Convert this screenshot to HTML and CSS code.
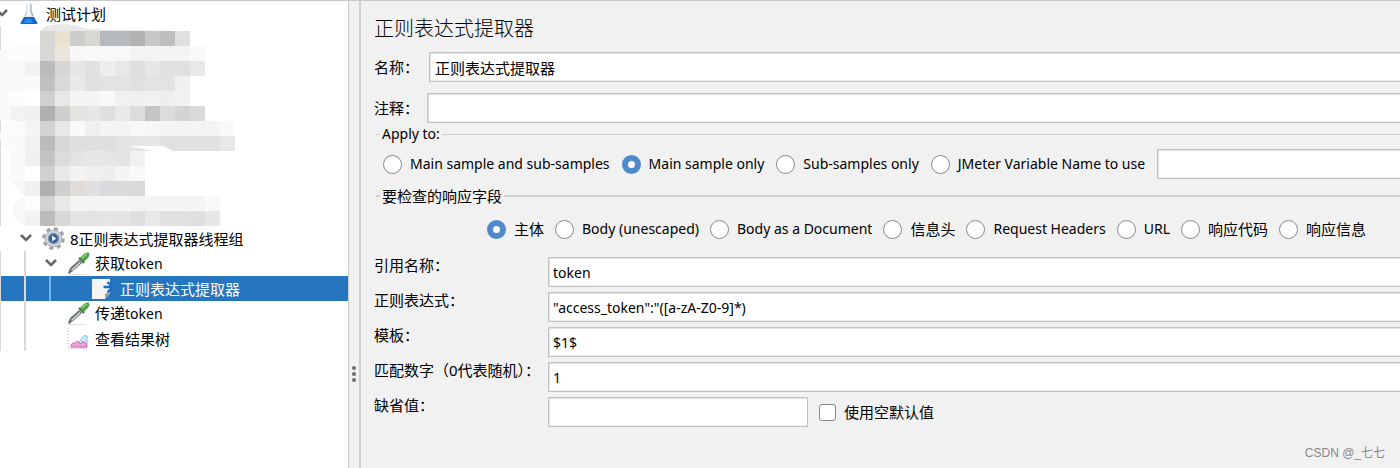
FILE: index.html
```
<!DOCTYPE html>
<html lang="zh-CN">
<head>
<meta charset="utf-8">
<title>正则表达式提取器</title>
<link rel="stylesheet" href="styles.css">
</head>
<body>
<svg class="defs" aria-hidden="true">
  <symbol id="chevron" viewBox="0 0 25 25"><path d="M4 9l5 5 5-5" fill="none" stroke="#666" stroke-width="2.600"/></symbol>
  <symbol id="pipette" viewBox="0 0 23 23">
    <path d="M1 22.500h18" stroke="#e2e2e2"/>
    <path d="M1 21l2-5 9-8 3 3-9 8-4 3z" fill="#6e7473"/>
    <path d="M4 18l8.500-8 1 1-8 7.500z" fill="#d5dada"/>
    <path d="M12 6l5 5" stroke="#4d5550" stroke-width="2"/>
    <path d="M12 6c2-1 3-2 4-3 2-2 4-3 6-2 1 2 0 4-2 6-2 1-2 2-3 4z" fill="#4f9f45"/>
    <path d="M15 6l5-4" stroke="#9bd18c" stroke-width="1.500"/>
  </symbol>
</svg>
<div class="app">
  <nav class="tree">
    <div class="row">
      <svg class="chev"><use href="#chevron"/></svg>
      <svg class="icon" viewBox="0 0 23 23">
        <path d="M8.500 2h5v7l6 12q.5 1-1 1h-15q-1.500 0-1-1l6-12z" fill="#e4e9ed"/>
        <path d="M6 15h10l3.500 6q0 1-1 1H3.500q-1 0-1-1z" fill="#1767c9"/>
        <path d="M8 17h5l2 4H6z" fill="#2f8cf0"/>
        <path d="M13 2v7l2 5" fill="none" stroke="#9aa3aa"/><path d="M9 2v8l-2 4" fill="none" stroke="#c3cbd1"/>
        <path d="M10.500 2v12" stroke="#fff" stroke-width="2"/>
      </svg>
      <span>测试计划</span>
    </div>
    <svg class="mosaic" id="mosaic" viewBox="0 0 250 200" aria-hidden="true"></svg>
    <div class="row">
      <i class="chev first"></i><svg class="chev"><use href="#chevron"/></svg>
      <svg class="icon" viewBox="0 0 23 23">
        <circle cx="11.500" cy="11.500" r="9.800" fill="none" stroke="#9ca2a9" stroke-width="3" stroke-dasharray="4 3.700"/>
        <circle cx="11.500" cy="11.500" r="8.300" fill="#d3d7db" stroke="#a3a9b0"/>
        <circle cx="11.500" cy="11.500" r="5" fill="#2d5f9e" stroke="#7f8fa4" stroke-width="1.500"/>
        <path d="M10 8.500l4.500 3-4.500 3z" fill="#e8f2fc"/>
      </svg>
      <span>8正则表达式提取器线程组</span>
    </div>
    <div class="row">
      <i class="guide"></i><i class="guide"></i><svg class="chev"><use href="#chevron"/></svg>
      <svg class="icon"><use href="#pipette"/></svg>
      <span>获取<b>token</b></span>
    </div>
    <div class="row selected">
      <i class="guide"></i><i class="guide"></i><i class="guide"></i><i class="chev"></i>
      <svg class="icon" viewBox="0 0 23 23">
        <path d="M0 2h18v14l-5 6H0z" fill="#f4f4f4"/><path d="M18 15l-5 7v-5z" fill="#999"/>
        <path d="M11.500 10H20M15.500 5l5 5-5 5.500" fill="none" stroke="#1c6cc4" stroke-width="2.400"/>
      </svg>
      <span>正则表达式提取器</span>
    </div>
    <div class="row">
      <i class="guide"></i><i class="guide"></i><i class="chev"></i>
      <svg class="icon"><use href="#pipette"/></svg>
      <span>传递<b>token</b></span>
    </div>
    <div class="row">
      <i class="guide"></i><i class="guide"></i><i class="chev"></i>
      <svg class="icon" viewBox="0 0 23 23">
        <path d="M1 1v20.500h19" fill="none" stroke="#aaa" stroke-dasharray="1 2"/>
        <path d="M11 20c0-3 1-5 3-7 1-4 3-5 6-4v11z" fill="#d3e6fa" stroke="#8fbcec"/>
        <path d="M4 20c0-4 2-4 4-4 2-3 4-2 5 1 2-1 2-3 4-2 2 0 2 2 3 5z" fill="#ee9fdc" stroke="#cc66b0"/>
      </svg>
      <span>查看结果树</span>
    </div>
  </nav>
  <div class="divider"><i></i><i></i><i></i></div>
  <main class="panel">
    <h1>正则表达式提取器</h1>
    <div class="line"><label for="name">名称：</label><input class="field" id="name" value="正则表达式提取器"></div>
    <div class="line"><label for="note">注释：</label><input class="field" id="note"></div>
    <fieldset>
      <legend>Apply to:</legend>
      <div class="options">
        <label><input type="radio" name="scope">Main sample and sub-samples</label>
        <label><input type="radio" name="scope" checked>Main sample only</label>
        <label><input type="radio" name="scope">Sub-samples only</label>
        <label><input type="radio" name="scope">JMeter Variable Name to use</label>
        <input class="field" aria-label="JMeter Variable Name">
      </div>
    </fieldset>
    <fieldset class="response">
      <legend>要检查的响应字段</legend>
      <div class="options">
        <label class="zh"><input type="radio" name="part" checked>主体</label>
        <label><input type="radio" name="part">Body (unescaped)</label>
        <label><input type="radio" name="part">Body as a Document</label>
        <label class="zh"><input type="radio" name="part">信息头</label>
        <label><input type="radio" name="part">Request Headers</label>
        <label><input type="radio" name="part">URL</label>
        <label class="zh"><input type="radio" name="part">响应代码</label>
        <label class="zh"><input type="radio" name="part">响应信息</label>
      </div>
    </fieldset>
    <div class="grid">
      <label for="ref">引用名称：</label><input class="field" id="ref" value="token">
      <label for="regex">正则表达式：</label><input class="field" id="regex" value="&quot;access_token&quot;:&quot;([a-zA-Z0-9]*)">
      <label for="tpl">模板：</label><input class="field" id="tpl" value="$1$">
      <label for="match">匹配数字（0代表随机）：</label><input class="field" id="match" value="1">
      <label for="def">缺省值：</label>
      <div class="default"><input class="field" id="def"><label><input type="checkbox">使用空默认值</label></div>
    </div>
    <footer>CSDN @_七七</footer>
  </main>
</div>
<script src="mosaic.js"></script>
</body>
</html>
```
FILE: mosaic.js
```
// Shades of the pixelated block: one row per line, 15px cells starting at x = 10.
const rows = [
  "- - d6d6d2 e8e2cf cacdca d7d7d4 b7babd b8bbbd b2 c7 be e0",
  "fc fb d8 e9e7dc f7 f9 f8 f8 f3 f4 f4 f4 f9",
  "f9 f2 bb d6 e6 e1 ee e8 df e7 e1 e0 e9",
  "f8 fa c1 d9 e9 e1 e3 e3 e0 e3 e3 f0",
  "fc ff d0 e8 f4 f4 fa f1 ef f1 ee f2",
  "f3 f0 b0 cf e4e4e1 e4e6e8 df e9 dc c5 dc d4 d9",
  "fb f4 d3 e8 f9 ef f5 f4 f8 f6 f4 f4 f4 f4 f9",
  "fa f2 bb d7 df df df e3 e5 e5 e1 e1 e1 e1 e8",
  "f9 f0 c3 dc e4 e7 e5 e4 f1",
  "fa ff d1 e9 f2 ef ee f5 f9",
  "f5 f0 b0 cf dfdcd8 df d8dadd da da",
  "- fd d2 e8 f3 f4 f4 f4 f3 f4 f4 f4 f4 f9",
  "- f2 bb d8 e4 e3 e5 e4 df e8 e1 e1 df e7"
];
const NS = "http://www.w3.org/2000/svg";
const svg = document.getElementById("mosaic");
function add(name, attrs) {
  const el = document.createElementNS(NS, name);
  for (const key in attrs) el.setAttribute(key, attrs[key]);
  svg.appendChild(el);
}
add("path", { d: "M0 0h1v200h-1z", fill: "#d9d9d9" });
add("path", { d: "M40 5q5-7 22-7 14 0 23 5 45 1 90 2v4H40z", fill: "#e8e8e8" });
add("path", { d: "M0 24h20v70H0z", fill: "#fafafa" });
add("circle", { cx: 16, cy: 110, r: 16, fill: "#fafafa" });
add("circle", { cx: 27, cy: 185, r: 14, fill: "#f8f8f8" });
rows.forEach((line, r) => line.split(" ").forEach((shade, c) => {
  if (shade === "-") return;
  add("rect", { x: 10 + c * 15, y: 5 + r * 15, width: 15, height: 15,
    fill: "#" + (shade.length === 2 ? shade.repeat(3) : shade), "shape-rendering": "crispEdges" });
}));
add("path", { d: "M130 120h33l10 5h-20z", fill: "#fff" });
add("path", { d: "M3 138h3q0 14 10 22l9 10H3z", fill: "#fff" });
```
FILE: styles.css
```
* { box-sizing: border-box; }
body {
  margin: 0;
  background: #f1f1f1;
  color: #000;
  font: 14px/20px "Noto Sans", "Noto Sans CJK SC", sans-serif;
}
.defs { position: absolute; width: 0; height: 0; }
.app { display: flex; min-height: 100vh; border-top: 1px solid #c9c9c9; overflow: hidden; }

.tree { flex: 0 0 348px; background: #fff; overflow: hidden; font-size: 15px; }
.tree b { font-size: 14px; font-weight: inherit; }
.row { display: flex; align-items: center; height: 25px; white-space: nowrap; }
.guide { flex: 0 0 25px; height: 25px; border-left: 2px solid #d9d9d9; }
.guide:first-child { flex-basis: 24px; border-left-width: 1px; }
.chev { flex: 0 0 25px; width: 25px; height: 25px; margin-left: -7px; }
.first { flex-basis: 31px; }
.icon { flex: 0 0 23px; width: 23px; height: 23px; margin-right: 5px; }
.selected { background: #2675bf; color: #fff; }
.selected .guide:nth-child(3) { border-color: #78b8f2; }
.mosaic { display: block; width: 250px; height: 200px; overflow: visible; }

.divider {
  flex: 0 0 13px; display: flex; flex-direction: column; align-items: center; gap: 2px;
  padding-top: 365px; border-left: 1px solid #c9c9c9; border-right: 2px solid #cfcfcf;
}
.divider i { width: 4px; height: 4px; border-radius: 50%; background: #6e6e6e; }

.panel { flex: 1; min-width: 0; display: flex; flex-direction: column; padding: 12px 0 0 13px; }
h1 { margin: 0; font: 300 20px/30px "Noto Sans CJK SC", sans-serif; color: #000; }
.field {
  height: 30px; min-width: 0; padding: 0 4px; border: 1px solid #c3c3c3; border-right: 0;
  box-shadow: inset 1px 1px #e2e2e2, inset 0 -1px #ececec;
  background: #fff; font: inherit; color: inherit; border-radius: 0; outline: 0;
}
.line { display: flex; align-items: center; gap: 10px; margin-top: 9px; }
.line + .line { margin-top: 11px; gap: 8px; }
.line .field { flex: 1; padding: 0 5px; }
.line label, .line .field { font-size: 15px; }

fieldset { margin: 1px 0 0 2px; padding: 0; border: 0; border-top: 1px solid #cfcfcf; min-width: 0; }
legend { margin-left: 4px; padding: 0 2px; line-height: 20px; }
.options { display: flex; align-items: center; gap: 12px; padding: 5px 0 7px 7px; white-space: nowrap; }
.options label { display: flex; align-items: center; gap: 8px; }
.options .field { flex: 1; }
.response { margin-top: 0; border-top-width: 2px; }
.response legend, .response .zh { font-size: 15px; }
.response .options { padding: 13px 0 18px 111px; gap: 11px; }
input[type=radio] {
  appearance: none; flex: none; width: 19px; height: 19px; margin: 0; border: 1px solid #888;
  border-radius: 50%; background: #fff;
}
input[type=radio]:checked { border: 6px solid #4e8acb; }

.grid { display: grid; grid-template-columns: 174px 1fr; row-gap: 5px; }
.grid > label { font-size: 15px; white-space: nowrap; line-height: 16px; }
.default { display: flex; align-items: center; gap: 11px; }
.default .field { width: 260px; border-right: 1px solid #c3c3c3; }
.default label { display: flex; align-items: center; gap: 8px; font-size: 15px; }
input[type=checkbox] {
  appearance: none; width: 17px; height: 17px; margin: 0; border: 1px solid #888; border-radius: 3px; background: #fff;
}
footer { margin: auto 15px 5px auto; color: #888; font: 12px/20px "Liberation Sans", "Noto Sans CJK SC", sans-serif; }
```
